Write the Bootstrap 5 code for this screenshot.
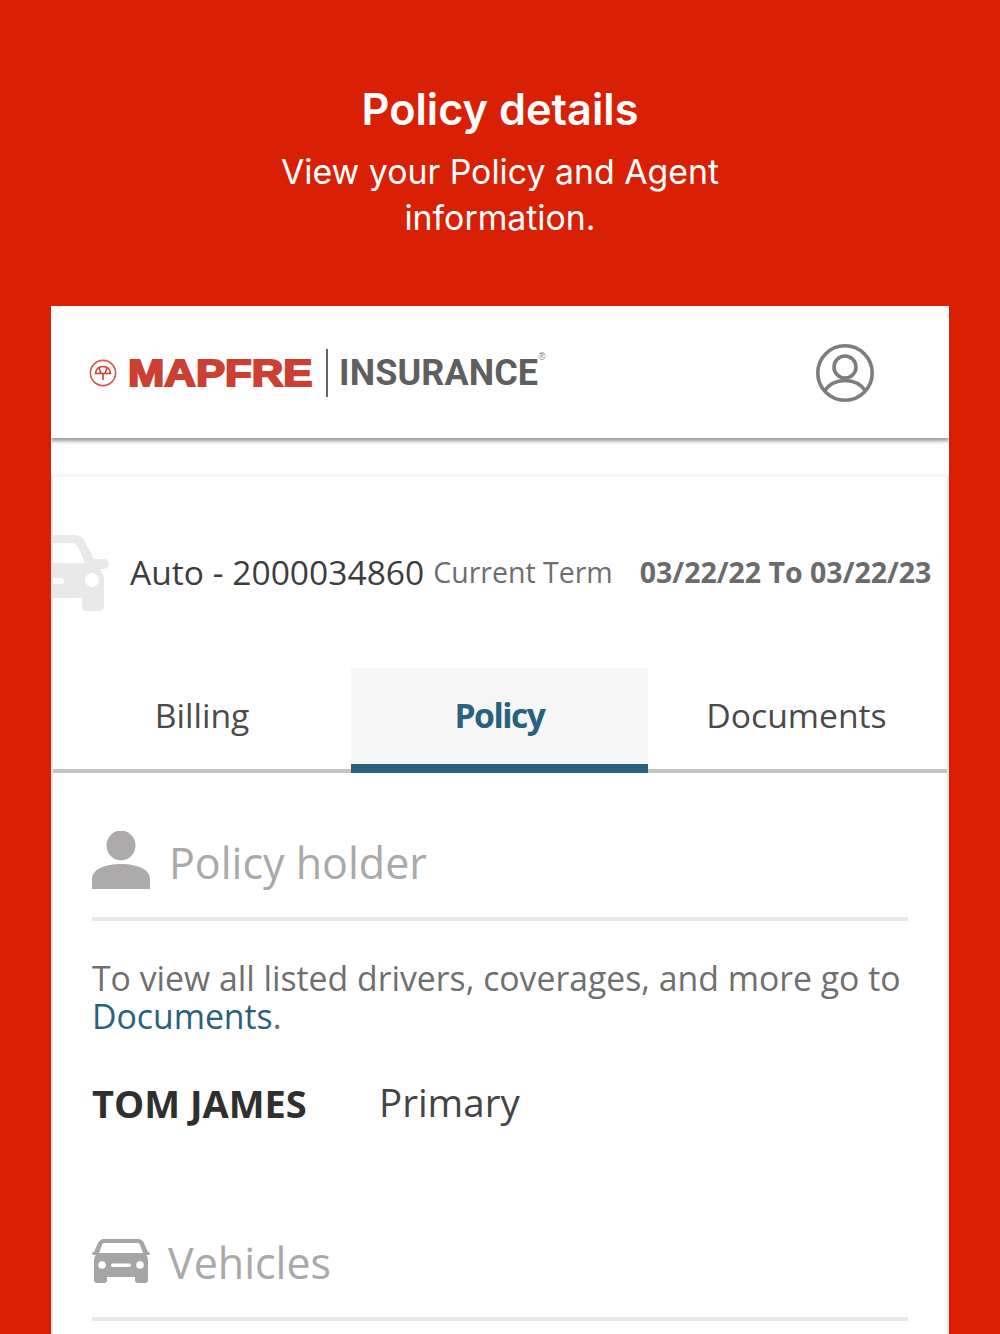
<!doctype html>
<html lang="en"><head><meta charset="utf-8"><title>Policy details</title>
<link rel="stylesheet" href="https://cdn.jsdelivr.net/npm/bootstrap@5.3.0/dist/css/bootstrap.min.css">
<style>
html,body{height:1334px;overflow:hidden}
body{background:#da2004;font-family:"Open Sans",sans-serif}
.hero{height:306px;padding-top:82px;color:#fff;font-family:Inter,sans-serif}
.hero-title{font-size:43.300px;font-weight:600;line-height:54px;margin:0}
.hero-sub{font-size:33.850px;line-height:46px;margin:13px 0 0;font-weight:400}
.panel{width:898px;height:1028px;overflow:hidden;background:#fff}
.appbar{height:132px;padding:2px 74px 0 38px;box-shadow:0 3px 4px rgba(0,0,0,.42);position:relative;z-index:2;background:#fff}
.brand-mark{margin-right:11px;flex:none}
.brand-red{font-family:"Liberation Sans",sans-serif;font-weight:700;font-size:37px;color:#cb4033;-webkit-text-stroke:2px #cb4033;transform:scaleX(1.18);transform-origin:left;display:inline-block;width:198px;line-height:1}
.brand-rule{width:2px;height:48px;background:#666;margin:0 11px 0 0}
.brand-grey{font-family:"Roboto",sans-serif;font-weight:700;font-size:36px;color:#5f5f5f;line-height:1;letter-spacing:.1px}
.brand-reg{font-family:"Liberation Sans",sans-serif;font-size:10px;color:#8a8a8a;align-self:flex-start;margin:3px 0 0 0;line-height:1}
.gap-band{height:36px;background:#fff}
.sheet{height:860px;border-top:3px solid #f7f7f7;border-left:2px solid #e4e4e4;border-right:2px solid #e4e4e4}
.policy-row{height:191px;align-items:center;overflow:hidden}
.car-cut{margin-left:-24px;margin-right:20px;flex:none}
.pol-num{font-size:33.600px;color:#3d3d3d;line-height:1;white-space:nowrap}
.pol-term{font-size:28.500px;color:#6e6e6e;margin-left:9px;white-space:nowrap;line-height:1}
.pol-dates{font-size:28.500px;font-weight:700;color:#6b6b6b;margin-left:27px;white-space:nowrap;line-height:1}
.tabbar{height:105px;border-bottom:4px solid #c4c4c4}
.tab-item{width:297px;height:105px;font-size:33.700px;color:#4a4a4a;display:flex;align-items:center;justify-content:center;padding-bottom:10px;flex:none}
.tab-first{width:298px}
.tab-on{background:#f6f6f6;color:#2a627d;font-weight:700;border-bottom:9px solid #2a627d;letter-spacing:-1.5px;padding-bottom:2px}
.sect{padding:0 39px}
.sect-head{display:flex;align-items:center;gap:19px;border-bottom:4px solid #e8e8e8}
.sect-holder{height:148px;padding-top:30px}
.sect-name{font-size:43px;color:#a9a9a9;line-height:1;white-space:nowrap;padding-top:5px}
.note{font-size:33.750px;line-height:38px;color:#6f6f6f;margin:38px 0 0}
.doc-link{color:#2a627d;text-decoration:none}
.holder{margin-top:30px;height:76px;font-size:38px;align-items:center}
.holder-name{font-weight:700;color:#2f2f2f;width:287px;white-space:nowrap}
.holder-role{color:#444;font-size:38.500px}
.veh{margin-top:64px;height:116px;gap:18px}
.veh .sect-name{padding-top:3px}
</style></head><body>
<header class="hero text-center">
<h1 class="hero-title">Policy details</h1>
<p class="hero-sub">View your Policy and Agent<br>information.</p>
</header>
<main class="panel mx-auto">
<div class="appbar d-flex align-items-center justify-content-between">
<div class="d-flex align-items-center">
<svg width="28" height="28" viewBox="0 0 28 28" class="brand-mark" aria-hidden="true"><circle cx="14" cy="14" r="12.600" fill="none" stroke="#cf5a4d" stroke-width="1.600"/><path d="M6.500 14.500C7 9.500 10.500 7.500 14 7.500s7 2 7.500 7h-15Z" fill="none" stroke="#cb4033" stroke-width="1.600"/><path d="M10 9 12 14.500M18 9 16 14.500M14 14.500V21" fill="none" stroke="#cb4033" stroke-width="1.600"/></svg>
<span class="brand-red">MAPFRE</span>
<span class="brand-rule"></span>
<span class="brand-grey">INSURANCE</span><span class="brand-reg">®</span>
</div>
<svg width="60" height="60" viewBox="0 0 60 60" aria-hidden="true"><g fill="none" stroke="#7d7d7d" stroke-width="3.600"><circle cx="30" cy="30" r="27.200"/><circle cx="30" cy="24" r="11"/><path d="M9 48.500C14 41 21 37.500 30 37.500s16 3.500 21 11"/></g></svg>
</div>
<div class="gap-band"></div>
<section class="sheet">
<div class="policy-row d-flex">
<svg class="car-cut" width="81" height="76" viewBox="0 0 81 76" aria-hidden="true"><path d="M6 0H45C50 0 54 2 56 7L65 24H74C78 24 80 26 80 29 80 32 77 34 74 34H71C73 37 75 41 75 45V72C75 74 73 76 71 76H57C55 76 53 74 53 72V63H0V0Z" fill="#e9e9e9"/><path d="M8 8H43C46 8 48 10 49 12L56 28H0L4 12C5 10 6 8 8 8Z" fill="#fff"/><circle cx="63" cy="45" r="7" fill="#fff"/><rect x="0" y="43" width="35" height="6" rx="3" fill="#fff"/></svg>
<span class="pol-num">Auto - 2000034860</span><span class="pol-term">Current Term</span><span class="pol-dates">03/22/22 To 03/22/23</span>
</div>
<nav class="tabbar d-flex justify-content-start">
<div class="tab-item tab-first">Billing</div>
<div class="tab-item tab-on">Policy</div>
<div class="tab-item">Documents</div>
</nav>
<div class="sect">
<div class="sect-head sect-holder"><svg width="58" height="58" viewBox="0 0 58 58" aria-hidden="true"><ellipse cx="29" cy="14.500" rx="14.500" ry="15" fill="#acaaaa"/><path d="M0 58V48C0 38 14 33 29 33s29 5 29 15V58Z" fill="#acaaaa"/></svg><span class="sect-name">Policy holder</span></div>
<p class="note">To view all listed drivers, coverages, and more go to <a class="doc-link" href="#">Documents</a>.</p>
<div class="holder d-flex"><span class="holder-name">TOM JAMES</span><span class="holder-role">Primary</span></div>
<div class="sect-head veh"><svg width="58" height="44" viewBox="0 0 58 44" aria-hidden="true"><path d="M12 0H46C49 0 51 2 52 4L56 13H57C58 13 58 16 57 16H54C56 18 56 20 56 23V41C56 43 55 44 53 44H46C44 44 43 43 43 41V38H15V41C15 43 14 44 12 44H5C3 44 2 43 2 41V23C2 20 2 18 4 16H1C0 16 0 13 1 13H2L6 4C7 2 9 0 12 0Z" fill="#a5a5a5"/><path d="M12 4H46C47 4 48 5 48 6L51 14H7L10 6C10 5 11 4 12 4Z" fill="#fff"/><circle cx="10" cy="26" r="3.800" fill="#fff"/><circle cx="48" cy="26" r="3.800" fill="#fff"/><rect x="19" y="24.500" width="20" height="3.500" rx="1.700" fill="#fff"/></svg><span class="sect-name">Vehicles</span></div>
</div>
</section>
</main>
</body></html>
